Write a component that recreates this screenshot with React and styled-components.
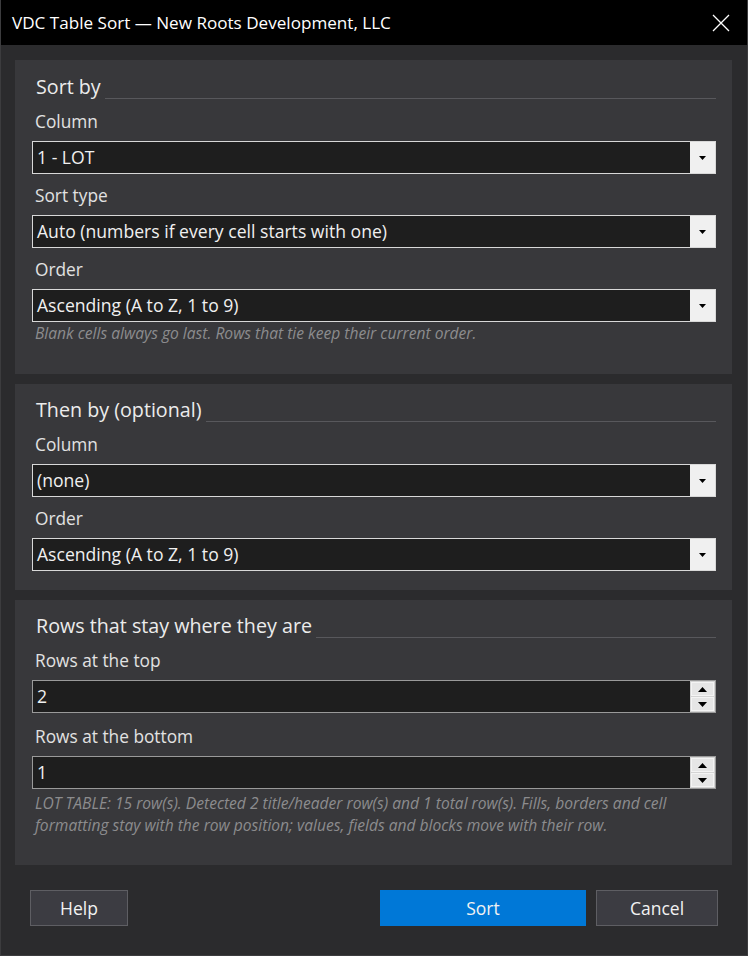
import React from "react";
import styled, { createGlobalStyle } from "styled-components";

const GlobalStyle = createGlobalStyle`
  html, body {
    margin: 0;
    padding: 0;
    background: #2b2b2d;
  }
  * { box-sizing: border-box; }
`;

const font = `"Open Sans", "Noto Sans", "Liberation Sans", sans-serif`;

const Window = styled.div`
  width: 748px;
  height: 956px;
  display: flex;
  flex-direction: column;
  background: #2b2b2d;
  border-left: 1px solid #3c3c3e;
  border-right: 1px solid #3c3c3e;
  border-bottom: 1px solid #3c3c3e;
  font-family: ${font};
  color: #e6e6e6;
  line-height: 1;
`;

const TitleBar = styled.div`
  height: 45px;
  flex: none;
  background: #000;
  display: flex;
  align-items: center;
  justify-content: space-between;
  padding: 0 16px 0 11px;
`;

const Title = styled.div`
  font-size: 17.1px;
  color: #ffffff;
`;

const CloseButton = styled.div`
  width: 20px;
  height: 20px;
  display: flex;
  align-items: center;
  justify-content: center;
`;

const Body = styled.div`
  flex: none;
  display: flex;
  flex-direction: column;
  gap: 10px;
  padding: 15px 15px 0 14px;
`;

const Panel = styled.section`
  flex: none;
  background: #38383b;
  padding: ${(p) => p.$pt}px 16px ${(p) => p.$pb}px 17px;
  display: flex;
  flex-direction: column;
`;

const Heading = styled.div`
  flex: none;
  height: 26px;
  display: flex;
  align-items: center;
  gap: 4px;
  padding-left: 4px;
  margin-bottom: 10px;
  font-size: 19.7px;
  color: #ececec;
  white-space: nowrap;

  &::after {
    content: "";
    flex: 1;
    height: 1px;
    background: #58585c;
    align-self: flex-end;
    margin-bottom: 1px;
  }
`;

const FieldList = styled.div`
  flex: none;
  display: flex;
  flex-direction: column;
  gap: ${(p) => p.$gap}px;
`;

const Field = styled.div`
  flex: none;
  height: 64px;
  display: flex;
  flex-direction: column;
`;

const Label = styled.div`
  flex: none;
  height: 24px;
  line-height: 24px;
  padding-left: 3px;
  margin-bottom: 7px;
  font-size: 17.3px;
  color: #e2e2e2;
  white-space: nowrap;
`;

const Control = styled.div`
  flex: none;
  height: 33px;
  display: flex;
  align-items: stretch;
  background: #1e1e1e;
  border: 1px solid ${(p) => (p.$spin ? "#9a9a9a" : "#d8d8d8")};
`;

const Value = styled.div`
  flex: 1;
  display: flex;
  align-items: center;
  padding-left: 4px;
  font-size: 17.6px;
  color: #f0f0f0;
  white-space: nowrap;
`;

const DropButton = styled.div`
  width: 25px;
  background: #f0f0f0;
  display: flex;
  align-items: center;
  justify-content: center;
`;

const SpinBox = styled.div`
  width: 25px;
  display: flex;
  flex-direction: column;
  background: #d4d4d4;
  padding: 1px;
  gap: 1px;
`;

const SpinButton = styled.div`
  flex: 1;
  background: #e6e6e6;
  border: 1px solid #f4f4f4;
  display: flex;
  align-items: center;
  justify-content: center;
`;

const Hint = styled.div`
  flex: none;
  margin-top: ${(p) => p.$mt || 0}px;
  padding-left: 3px;
  font-size: 15.6px;
  line-height: 22px;
  font-style: italic;
  color: #8c8c8e;
`;

const Footer = styled.div`
  flex: none;
  display: flex;
  align-items: center;
  padding: 25px 29px 0 29px;
  gap: 10px;
`;

const Button = styled.button`
  height: 36px;
  width: ${(p) => p.$w}px;
  margin-right: ${(p) => (p.$push ? "auto" : "0")};
  background: ${(p) => (p.$primary ? "#0078d7" : "#3c3c42")};
  border: 1px solid ${(p) => (p.$primary ? "#0078d7" : "#5e5e63")};
  color: #f2f2f2;
  font-family: ${font};
  font-size: 17.5px;
  padding: 0;
  cursor: pointer;
`;

const Triangle = ({ down = true, w = 7, h = 4 }) => (
  <svg width={w} height={h} viewBox={`0 0 ${w} ${h}`} style={{ display: "block" }}>
    <polygon
      points={down ? `0,0 ${w},0 ${w / 2},${h}` : `0,${h} ${w},${h} ${w / 2},0`}
      fill="#000"
    />
  </svg>
);

function Select({ label, value }) {
  return (
    <Field>
      <Label>{label}</Label>
      <Control>
        <Value>{value}</Value>
        <DropButton>
          <Triangle />
        </DropButton>
      </Control>
    </Field>
  );
}

function Spinner({ label, value }) {
  return (
    <Field>
      <Label>{label}</Label>
      <Control $spin>
        <Value>{value}</Value>
        <SpinBox>
          <SpinButton>
            <Triangle down={false} w={9} h={5} />
          </SpinButton>
          <SpinButton>
            <Triangle w={9} h={5} />
          </SpinButton>
        </SpinBox>
      </Control>
    </Field>
  );
}

export default function App() {
  return (
    <>
      <GlobalStyle />
      <Window>
        <TitleBar>
          <Title>VDC Table Sort — New Roots Development, LLC</Title>
          <CloseButton>
            <svg width="18" height="18" viewBox="0 0 18 18" style={{ display: "block" }}>
              <path d="M1 1 L17 17 M17 1 L1 17" stroke="#fff" strokeWidth="1.3" />
            </svg>
          </CloseButton>
        </TitleBar>
        <Body>
          <Panel $pt={14} $pb={30}>
            <Heading>Sort by</Heading>
            <FieldList $gap={10}>
              <Select label="Column" value="1 - LOT" />
              <Select label="Sort type" value="Auto (numbers if every cell starts with one)" />
              <Select label="Order" value="Ascending (A to Z, 1 to 9)" />
            </FieldList>
            <Hint>Blank cells always go last. Rows that tie keep their current order.</Hint>
          </Panel>
          <Panel $pt={13} $pb={19}>
            <Heading>Then by (optional)</Heading>
            <FieldList $gap={10}>
              <Select label="Column" value="(none)" />
              <Select label="Order" value="Ascending (A to Z, 1 to 9)" />
            </FieldList>
          </Panel>
          <Panel $pt={13} $pb={29}>
            <Heading>Rows that stay where they are</Heading>
            <FieldList $gap={12}>
              <Spinner label="Rows at the top" value="2" />
              <Spinner label="Rows at the bottom" value="1" />
            </FieldList>
            <Hint $mt={3}>
              LOT TABLE: 15 row(s). Detected 2 title/header row(s) and 1 total row(s). Fills, borders and cell
              formatting stay with the row position; values, fields and blocks move with their row.
            </Hint>
          </Panel>
        </Body>
        <Footer>
          <Button $w={98} $push>Help</Button>
          <Button $w={206} $primary>Sort</Button>
          <Button $w={122}>Cancel</Button>
        </Footer>
      </Window>
    </>
  );
}
